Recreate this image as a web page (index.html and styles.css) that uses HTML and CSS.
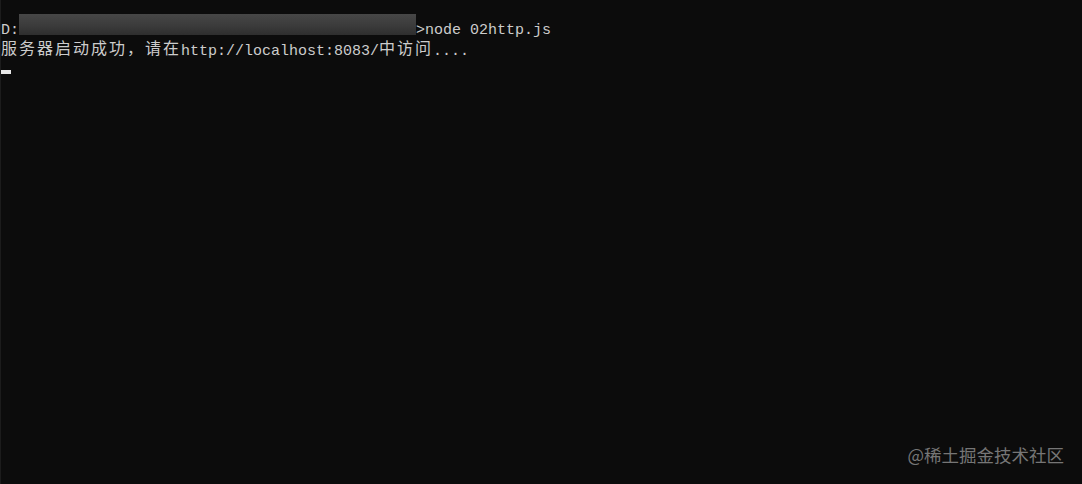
FILE: index.html
```html
<!DOCTYPE html>
<html lang="zh-CN">
<head>
  <meta charset="UTF-8" />
  <title>Command Prompt</title>
  <link rel="stylesheet" href="styles.css">
</head>
<body>

  <main class="console">
    <div class="line">D:<span class="blurred"></span>&gt;node 02http.js</div>
    <div class="line"><span class="cjk">服务器启动成功，请在</span>http://localhost:8083/<span class="cjk">中访问</span>....</div>
    <div class="line"><span class="cursor"></span></div>
  </main>

  <div class="watermark">@稀土掘金技术社区</div>

</body>
</html>
```

FILE: styles.css
```css
html,
body {
  height: 100%;
}

body {
  margin: 0;
  padding: 0;
  background: #0c0c0c;
  border-left: 1px solid #1c1c1c;
  box-sizing: border-box;
  color: #cccccc;
  font-family: "Liberation Mono", "Noto Sans CJK SC", monospace;
  font-size: 15px;
  overflow: hidden;
  position: relative;
}

.console {
  padding-top: 21px;
}

.line {
  height: 19px;
  line-height: 19px;
  white-space: pre;
}

.cjk {
  font-family: "Noto Sans CJK SC", sans-serif;
  font-size: 16px;
  color: #cccccc;
  letter-spacing: 2px;
  line-height: 14px;
  vertical-align: 1px;
}

/* redacted path, smudged like the screenshot */
.blurred {
  display: inline-block;
  width: 397px;
  height: 21px;
  vertical-align: top;
  transform: translateY(-7px);
  background: linear-gradient(#474747, #3a3a3a 60%, #2e2e2e);
  filter: blur(0.6px);
}

.cursor {
  display: inline-block;
  width: 10px;
  height: 4px;
  background: #e8e8e8;
  vertical-align: -2px;
}

/* site watermark, sits over the console */
.watermark {
  position: absolute;
  right: 18px;
  bottom: 17px;
  font-family: "Noto Sans CJK SC", sans-serif;
  font-size: 17.5px;
  color: #767676;
}
```
